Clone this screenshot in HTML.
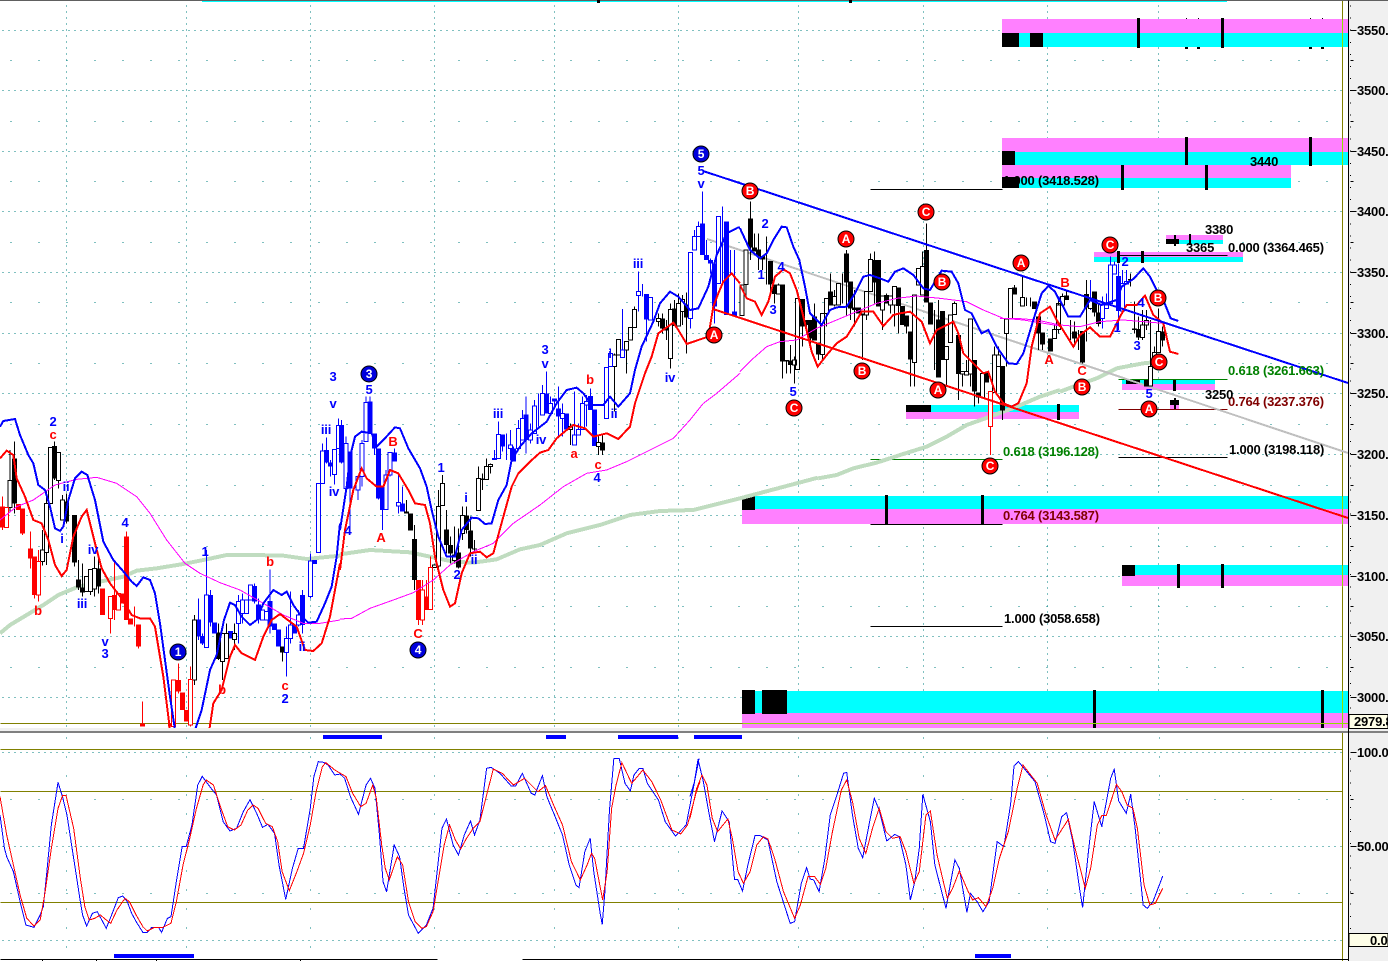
<!DOCTYPE html>
<html><head><meta charset="utf-8"><style>
html,body{margin:0;padding:0;background:#fff;width:1388px;height:961px;overflow:hidden}
svg{display:block}
text{font-family:"Liberation Sans",sans-serif;font-weight:bold;font-size:13px;letter-spacing:-.2px;white-space:pre}
path,polyline{fill:none;shape-rendering:crispEdges}
g.z path,g.z polyline{vector-effect:non-scaling-stroke}
rect{shape-rendering:crispEdges}
.d{stroke:#008080;stroke-width:1;stroke-dasharray:1 5}
.s{stroke:#008080;stroke-width:1;stroke-dasharray:1 27}
.v{stroke:#008080;stroke-width:1;stroke-dasharray:1 18}
.wk{stroke:#000;stroke-width:1}.wb{stroke:#00f;stroke-width:1}.wr{stroke:#f00;stroke-width:1}
.fk{stroke:#000;stroke-width:5}.fb{stroke:#00f;stroke-width:5}.fr{stroke:#f00;stroke-width:5}
.ok{stroke:#000;stroke-width:1;fill:#fff}.ob{stroke:#00f;stroke-width:1;fill:#fff}.or{stroke:#f00;stroke-width:1;fill:#fff}
.mb{stroke:#00f;stroke-width:2}.mr{stroke:#f00;stroke-width:2}
.mp{stroke:#f0f;stroke-width:1}.mg{stroke:#c0dcc0;stroke-width:4}
.sb{stroke:#00f;stroke-width:1}.sr{stroke:#f00;stroke-width:1}
.tb text{fill:#00f;text-anchor:middle}.tr text{fill:#f00;text-anchor:middle}
.cr circle{fill:#f00;stroke:#000;stroke-width:1}.cb circle{fill:#00d;stroke:#000;stroke-width:1}
.cw text{fill:#fff;text-anchor:middle;font-size:12px}
</style></head><body>
<svg width="1388" height="961" viewBox="0 0 1388 961" xmlns="http://www.w3.org/2000/svg">
<defs><clipPath id="m"><rect x="0" y="2" width="1348" height="726"/></clipPath></defs>
<rect width="1388" height="961" fill="#fff"/>
<rect x="1349" y="0" width="39" height="961" fill="#f0f0f0"/>

<!-- grid main -->
<g transform="translate(.5 .5)">
<path class="d" d="M2 30H1342M2 90H1342M2 151H1342M2 211H1342M2 272H1342M2 333H1342M2 393H1342M2 454H1342M2 515H1342M2 576H1342M2 636H1342M2 697H1342"/>
<path class="s" d="M10 60H1342M10 121H1342M10 181H1342M10 242H1342M10 302H1342M10 363H1342M10 424H1342M10 485H1342M10 546H1342M10 606H1342M10 667H1342"/>
<path class="d" d="M66 5V728M186 5V728M310 5V728M434 5V728M554 5V728M678 5V728M798 5V728M923 5V728M1047 5V728M1158 5V728"/>
</g>

<!-- horizontal zones -->
<g>
<rect x="1002" y="19" width="346" height="14" fill="#ff80ff"/><rect x="1002" y="33" width="346" height="14" fill="#0ff"/>
<rect x="1002" y="33" width="17" height="14" fill="#000"/><rect x="1030" y="33" width="13" height="14" fill="#000"/>
<rect x="1137" y="18" width="3" height="30" fill="#000"/><rect x="1221" y="18" width="3" height="30" fill="#000"/>
<rect x="1186" y="18" width="1" height="1" fill="#000"/><rect x="1198" y="18" width="1" height="1" fill="#000"/><rect x="1310" y="18" width="1" height="1" fill="#000"/><rect x="1322" y="18" width="1" height="1" fill="#000"/>
<rect x="1185" y="47" width="3" height="2" fill="#000"/><rect x="1197" y="47" width="3" height="2" fill="#000"/><rect x="1309" y="47" width="3" height="2" fill="#000"/><rect x="1321" y="47" width="3" height="2" fill="#000"/>

<rect x="1002" y="138" width="346" height="14" fill="#ff80ff"/><rect x="1002" y="152" width="346" height="13" fill="#0ff"/>
<rect x="1002" y="151" width="13" height="14" fill="#000"/>
<rect x="1185" y="137" width="3" height="29" fill="#000"/><rect x="1309" y="137" width="3" height="29" fill="#000"/>

<rect x="1002" y="165" width="289" height="13" fill="#ff80ff"/><rect x="1002" y="178" width="289" height="10" fill="#0ff"/>
<rect x="1121" y="165" width="3" height="25" fill="#000"/><rect x="1205" y="165" width="3" height="25" fill="#000"/>

<rect x="1166" y="235" width="57" height="5" fill="#ff80ff"/><rect x="1166" y="240" width="57" height="4" fill="#0ff"/>
<rect x="1189" y="234" width="2" height="11" fill="#000"/>

<rect x="1094" y="252" width="149" height="5" fill="#ff80ff"/><rect x="1094" y="257" width="149" height="5" fill="#0ff"/>
<rect x="1117" y="251" width="3" height="12" fill="#000"/><rect x="1141" y="251" width="3" height="12" fill="#000"/>

<rect x="1122" y="379" width="93" height="5" fill="#0ff"/><rect x="1122" y="384" width="93" height="6" fill="#ff80ff"/>
<rect x="1126" y="380" width="14" height="4" fill="#000"/><rect x="1173" y="379" width="3" height="12" fill="#000"/>

<rect x="906" y="405" width="173" height="7" fill="#0ff"/><rect x="906" y="412" width="173" height="7" fill="#ff80ff"/>
<rect x="906" y="405" width="25" height="7" fill="#000"/><rect x="1057" y="404" width="3" height="16" fill="#000"/>

<rect x="1170" y="405" width="9" height="4" fill="#ff80ff"/><rect x="1170" y="400" width="9" height="5" fill="#000"/><rect x="1174" y="398" width="2" height="12" fill="#000"/>

<rect x="742" y="496" width="606" height="13" fill="#0ff"/><rect x="742" y="509" width="606" height="15" fill="#ff80ff"/>
<rect x="742" y="496" width="13" height="14" fill="#000"/>
<rect x="885" y="495" width="3" height="30" fill="#000"/><rect x="981" y="495" width="3" height="30" fill="#000"/>

<rect x="1122" y="565" width="226" height="10" fill="#0ff"/><rect x="1122" y="575" width="226" height="11" fill="#ff80ff"/>
<rect x="1122" y="565" width="13" height="11" fill="#000"/>
<rect x="1177" y="564" width="3" height="24" fill="#000"/><rect x="1221" y="564" width="3" height="24" fill="#000"/>

<rect x="742" y="691" width="606" height="22" fill="#0ff"/><rect x="742" y="713" width="606" height="15" fill="#ff80ff"/>
<rect x="742" y="690" width="13" height="24" fill="#000"/><rect x="762" y="690" width="25" height="24" fill="#000"/>
<rect x="1093" y="690" width="3" height="38" fill="#000"/><rect x="1321" y="690" width="3" height="38" fill="#000"/>
</g>

<!-- fib lines -->
<g transform="translate(.5 .5)">
<path stroke="#000" d="M870 189H1002M870 524H1002M870 626H1002M1118 255H1227M1118 457H1227"/>
<path stroke="#008000" d="M870 459H1002M1118 379H1227"/>
<path stroke="#800000" d="M1118 409H1227"/>
<path stroke="#808000" d="M0 723H1342M1342 0V961"/>
<path stroke="#90e000" d="M742 723H1348M1342 19V47M1342 138V165M1342 496V524M1342 565V586M1342 691V728"/>
</g>

<g clip-path="url(#m)">
<!-- green MA below candles -->
<g class="z" transform="translate(0,360) scale(.33333)"><polyline class="mg" points="0,820 30,795 80,765 130,735 175,705 235,680 300,665 370,650 410,632 470,625 550,612 620,598 680,585 760,585 850,587 920,597 1020,587"/></g>
<g class="z" transform="translate(340,140) scale(.33333)"><polyline class="mg" points="0,1243 90,1230 210,1237 270,1250 340,1265 400,1268 470,1258 540,1228 600,1215 680,1180 780,1155 870,1125 960,1113 1060,1110 1140,1090 1200,1075 1434,1013"/></g>
<g class="z" transform="translate(740,170) scale(.33333)"><polyline class="mg" points="235,925 290,915 340,895 410,878 480,855 560,830 620,800 680,765 750,740 830,710 900,680 960,660"/></g>
<g class="z" transform="translate(1000,130) scale(.33333)"><polyline class="mg" points="180,785 220,770 290,745 350,715 430,700 450,698"/></g>
<!-- grey trend -->
<path stroke="#c0c0c0" stroke-width="2" d="M707 239L1348 453"/>

<!-- candles Z1 -->
<g class="z" transform="translate(0,360) scale(.33333)">
<path class="wk" d="M43 245V460M163 245V360M200 400V490M223 465V620M235 600V690M247 610V710M295 590V700M655 790V900M847 860V905M30 270V455M127 510V617M139 395V615M175 277V385M187 405V480M271 628V705M283 590V710M259 650V695M583 765V975M667 820V960M680 790V895M703 790V870"/>
<path class="wr" d="M8 410V510M68 445V525M92 515V625M103 590V715M115 570V725M343 600V780M332 710V820M380 515V780M403 740V800M415 793V865M427 1025V1100M535 910V1000M572 920V1100"/>
<path class="wb" d="M595 715V840M607 820V855M619 570V863M631 690V800M715 705V850M727 700V790M763 670V730M775 715V790M810 628V820M859 800V950M871 695V850M895 750V800M907 690V820M931 580V715M967 250V370M979 233V310M991 300V350M1003 268V373M1015 175V265"/>
<path class="fk" d="M43 295V430M163 258V355M200 425V485M223 465V608M235 658V683M247 683V697M295 625V680M655 818V897M847 860V877"/>
<path class="fr" d="M8 440V503M55 432V450M68 445V520M92 565V595M103 590V705M307 685V765M343 705V750M380 530V780M392 775V793M415 793V860M368 700V730M427 1090V1100M535 960V995M548 998V1050M560 1050V1085M512 1090V1100"/>
<path class="fb" d="M595 778V830M607 828V850M631 705V788M643 788V820M691 813V835M763 678V725M775 733V778M810 723V800M823 790V810M835 808V860M883 795V820M907 705V795M943 600V612M979 270V307M991 308V320"/>
<path class="ok" d="M30 362m-6 0h12V442h-12zM127 570m-6 0h12V605h-12zM139 430m-6 0h12V577h-12zM152 262m-6 0h12V430h-12zM175 277m-6 0h12V362h-12zM187 420m-6 0h12V480h-12zM271 628m-6 0h12V695h-12zM283 625m-6 0h12V687h-12zM259 650m-6 0h12V695h-12zM583 780m-6 0h12V960h-12zM667 820m-6 0h12V905h-12zM680 820m-6 0h12V895h-12zM703 820m-6 0h12V838h-12z"/>
<path class="or" d="M20 443m-6 0h12V503h-12zM115 605m-6 0h12V705h-12zM332 710m-6 0h12V775h-12zM355 700m-6 0h12V750h-12zM520 960m-6 0h12V1100h-12zM572 958m-6 0h12V1095h-12z"/>
<path class="ob" d="M619 705m-6 0h12V863h-12zM715 725m-6 0h12V790h-12zM727 720m-6 0h12V760h-12zM739 720m-6 0h12V760h-12zM751 675m-6 0h12V720h-12zM787 750m-6 0h12V780h-12zM799 755m-6 0h12V780h-12zM859 835m-6 0h12V877h-12zM871 795m-6 0h12V835h-12zM895 765m-6 0h12V795h-12zM931 603m-6 0h12V710h-12zM955 370m-6 0h12V578h-12zM967 273m-6 0h12V370h-12zM1003 268m-6 0h12V343h-12zM1015 197m-6 0h12V265h-12z"/>
</g>

<!-- candles Z2 -->
<g class="z" transform="translate(340,140) scale(.33333)">
<path class="wk" d="M199 1080V1120M211 1120V1172M223 1155V1350M319 1110V1240M331 1190V1270M355 1165V1285M379 1100V1180M391 1130V1250M403 1200V1235M295 1050V1295M307 1005V1097M343 1160V1270M367 1100V1200M415 980V1112M427 1000V1050M439 955V1018M451 970V1000M775 885V945M787 885V945M691 850V915M823 640V815M835 598V645M859 605V700M871 562V600M883 500V562M955 520V560M967 520V580M979 540V600M991 490V685M1003 480V558M1015 460V560M1027 465V555M1039 457V640"/>
<path class="wr" d="M235 1320V1455M247 1320V1455M259 1320V1410M271 1250V1408"/>
<path class="wb" d="M5 840V970M18 890V1050M30 1010V1175M54 1010V1080M66 900V1040M78 770V905M90 770V880M103 880V945M115 925V1078M127 1040V1170M138 990V1108M150 937V1010M163 925V965M175 1000V1120M187 1040V1115M463 930V960M475 845V955M487 883V935M499 880V960M511 870V960M520 920V965M535 840V930M547 810V900M558 770V940M571 850V910M583 780V880M595 760V860M607 735V825M619 695V820M631 770V820M643 775V800M655 740V890M667 790V890M680 820V868M703 755V915M715 850V885M727 770V868M739 765V860M751 745V810M763 808V918M799 682V835M811 625V680M847 507V652M895 395V515M907 432V470M919 462V605M931 472V540M1051 337V565M1063 270V330M1075 245V290M1087 155V345M1099 300V360M1111 355V400M1123 370V550M1135 230V430M1147 200V430M1159 245V525M1171 330V400M1183 330V530"/>
<path class="fk" d="M199 1115V1120M211 1120V1172M223 1197V1320M319 1168V1215M331 1215V1240M355 1237V1283M379 1127V1170M391 1172V1225M403 1225V1228M427 1015V1020M787 907V932M967 535V565M979 563V572M1003 505V558M1039 493V533"/>
<path class="fr" d="M235 1320V1440M259 1370V1410"/>
<path class="fb" d="M5 855V968M30 935V1045M90 785V880M103 880V925M115 925V1075M127 1040V1110M163 937V965M187 1090V1115M487 883V920M520 925V965M558 823V900M619 760V820M643 775V785M655 805V830M680 820V868M751 768V810M763 808V918M919 462V538M1087 250V345M1099 345V360M1111 360V370M1123 370V500M1159 245V525M1183 515V530"/>
<path class="ok" d="M295 1100m-6 0h12V1278h-12zM307 1030m-6 0h12V1097h-12zM283 1275m-6 0h12V1282h-12zM343 1245m-6 0h12V1262h-12zM367 1127m-6 0h12V1180h-12zM415 1015m-6 0h12V1112h-12zM439 980m-6 0h12V1018h-12zM451 973m-6 0h12V980h-12zM775 907m-6 0h12V920h-12zM691 860m-6 0h12V868h-12zM823 645m-6 0h12V680h-12zM835 598m-6 0h12V645h-12zM859 605m-6 0h12V630h-12zM871 562m-6 0h12V600h-12zM883 508m-6 0h12V562h-12zM955 535m-6 0h12V545h-12zM991 508m-6 0h12V655h-12zM1015 490m-6 0h12V558h-12zM1027 478m-6 0h12V515h-12z"/>
<path class="or" d="M247 1350m-6 0h12V1440h-12zM271 1282m-6 0h12V1408h-12z"/>
<path class="ob" d="M18 910m-6 0h12V1045h-12zM54 1010m-6 0h12V1050h-12zM66 910m-6 0h12V1010h-12zM78 787m-6 0h12V905h-12zM138 1005m-6 0h12V1108h-12zM150 937m-6 0h12V1005h-12zM175 1088m-6 0h12V1098h-12zM475 883m-6 0h12V955h-12zM463 955m-6 0h12V958h-12zM511 915m-6 0h12V925h-12zM535 865m-6 0h12V925h-12zM547 835m-6 0h12V900h-12zM571 870m-6 0h12V900h-12zM583 798m-6 0h12V880h-12zM607 760m-6 0h12V825h-12zM631 790m-6 0h12V820h-12zM667 820m-6 0h12V835h-12zM703 885m-6 0h12V915h-12zM715 868m-6 0h12V885h-12zM727 790m-6 0h12V868h-12zM739 785m-6 0h12V795h-12zM799 682m-6 0h12V835h-12zM811 640m-6 0h12V680h-12zM847 630m-6 0h12V652h-12zM895 455m-6 0h12V467h-12zM931 472m-6 0h12V540h-12zM1051 337m-6 0h12V535h-12zM1063 290m-6 0h12V330h-12zM1075 260m-6 0h12V290h-12zM1135 230m-6 0h12V430h-12z"/>
</g>

<!-- candles Z3 -->
<g class="z" transform="translate(740,170) scale(.33333)">
<path class="wk" d="M6 345V437M18 240V380M31 95V270M43 190V245M55 190V300M67 258V300M79 200V343M92 273V380M103 343V400M115 340V372M127 343V625M139 570V610M151 525V610M163 560V640M172 385V598M187 387V530M199 450V490M211 450V520M223 400V512M235 517V570M247 430V570M259 385V470M271 310V407M283 360V410M295 340V405M307 310V400M319 240V440M331 335V450M343 360V470M355 413V430M367 430V570M379 365V450M391 250V365M403 245V400M415 270V410M427 378V480M439 370V400M451 378V430M463 350V470M475 352V490M487 408V465M499 437V490M511 485V650M523 375V650M535 295V345M547 245V375M559 160V397M571 397V463M583 420V600M595 390V622M607 423V570M619 530V650M631 435V518M643 395V433M655 495V690M667 605V650M679 570V615M691 447V650M703 570V710M715 668V700M727 610V680M739 608V637M763 530V668M775 530V590M787 588V750M799 447V590M811 355V447M823 345V373M847 315V408M859 383V408M871 383V410M883 395V417M895 440V540M907 487V540M931 505V545M943 460V505M955 400V478"/>
<path class="wr" d="M751 665V855"/>
<path class="fk" d="M31 145V232M43 232V245M55 238V260M67 258V268M92 273V343M103 343V372M127 343V575M139 570V575M151 572V585M187 387V470M199 450V465M211 450V505M223 440V512M235 517V553M271 365V407M319 250V338M331 335V415M343 413V420M355 413V430M367 430V436M403 270V338M415 270V410M439 375V400M475 352V408M487 408V465M499 437V470M511 485V568M559 240V397M571 397V463M595 448V622M607 423V570M655 495V612M703 570V665M715 668V682M739 608V637M787 588V722M823 352V373M883 395V417M895 440V490M907 487V523M931 505V545"/>
<path class="ok" d="M18 240m-6 0h12V343h-12zM6 345m-6 0h12V437h-12zM172 385m-6 0h12V598h-12zM115 345m-6 0h12V372h-12zM163 570m-6 0h12V585h-12zM247 430m-6 0h12V553h-12zM259 385m-6 0h12V430h-12zM295 340m-6 0h12V405h-12zM283 380m-6 0h12V405h-12zM391 268m-6 0h12V365h-12zM379 365m-6 0h12V435h-12zM427 378m-6 0h12V420h-12zM463 350m-6 0h12V405h-12zM451 378m-6 0h12V405h-12zM523 375m-6 0h12V578h-12zM535 295m-6 0h12V345h-12zM547 290m-6 0h12V375h-12zM619 530m-6 0h12V568h-12zM631 435m-6 0h12V518h-12zM643 400m-6 0h12V433h-12zM667 605m-6 0h12V612h-12zM679 605m-6 0h12V615h-12zM691 447m-6 0h12V612h-12zM727 610m-6 0h12V682h-12zM763 555m-6 0h12V668h-12zM775 555m-6 0h12V590h-12zM799 447m-6 0h12V490h-12zM811 355m-6 0h12V447h-12zM847 383m-6 0h12V408h-12zM943 478m-6 0h12V505h-12zM955 400m-6 0h12V478h-12z"/>
<path class="or" d="M751 665m-6 0h12V770h-12z"/>
</g>

<!-- candles Z4 -->
<g class="z" transform="translate(1000,130) scale(.33333)">
<path class="wk" d="M175 500V610M187 490V530M199 480V510M211 570V630M223 575V650M235 600V660M247 603V700M259 450V635M271 480V535M283 485V560M295 520V590M391 430V470M403 515V610M415 560V630M427 540V630M439 540V600M451 570V770M463 650V712M475 535V668M487 590V650"/>
<path class="wb" d="M271 450V540M307 500V595M319 490V530M331 380V520M343 395V432M355 400V600M367 420V543M379 420V462"/>
<path class="fk" d="M199 497V510M223 605V625M247 603V698M259 492V533M283 485V548M295 548V582M391 447V452M403 595V600M415 597V622M439 750V770M487 605V632"/>
<path class="fb" d="M355 438V543"/>
<path class="ok" d="M175 525m-6 0h12V598h-12zM187 500m-6 0h12V525h-12zM271 510m-6 0h12V535h-12zM427 585m-6 0h12V622h-12zM439 572m-6 0h12V585h-12zM451 710m-6 0h12V768h-12zM463 668m-6 0h12V712h-12zM475 605m-6 0h12V668h-12z"/>
<path class="ob" d="M307 522m-6 0h12V565h-12zM319 525m-6 0h12V535h-12zM331 405m-6 0h12V520h-12zM343 405m-6 0h12V432h-12zM367 460m-6 0h12V543h-12zM379 455m-6 0h12V462h-12z"/>
</g>

<!-- pink MA -->
<g class="z" transform="translate(0,360) scale(.33333)"><polyline class="mp" points="0,480 50,440 100,420 165,375 230,358 290,352 350,370 410,410 450,460 500,540 555,610 600,640 660,668 720,690 790,730 850,765 910,790 960,790 1020,780"/></g>
<g class="z" transform="translate(340,140) scale(.33333)"><polyline class="mp" points="0,1437 35,1435 90,1405 160,1380 220,1358 280,1320 330,1275 400,1235 460,1210 520,1150 600,1095 670,1040 740,1000 800,990 860,965 930,930 1000,895 1050,840 1090,790 1130,760 1200,700"/></g>
<g class="z" transform="translate(740,170) scale(.33333)"><polyline class="mp" points="0,605 40,565 80,530 120,515 170,510 230,475 290,450 350,425 410,400 470,385 530,378 600,385 680,395 730,420 790,445 850,450 900,458 960,468"/></g>
<g class="z" transform="translate(1000,130) scale(.33333)"><polyline class="mp" points="0,565 50,565 110,570 180,585 240,590 300,575 370,570 430,575 490,580"/></g>

<!-- blue MA -->
<g class="z" transform="translate(0,360) scale(.33333)">
<polyline class="mb" points="0,200 10,183 45,177 60,225 85,285 100,310 115,375 135,390 150,440 165,505 180,513 190,500 205,420 225,355 245,335 262,345 285,420 310,545 340,600 375,640 395,665 410,678 430,652 450,660 465,700 480,790 495,900 510,1010 525,1110"/>
<polyline class="mb" points="585,1110 605,1050 630,930 650,885 672,780 690,728 705,735 725,770 750,795 770,780 790,730 820,690 845,705 860,695 880,735 905,770 925,788 950,785 975,730 995,680 1010,590 1020,490"/>
<polyline class="mr" points="0,295 20,272 40,285 50,355 75,410 100,480 125,490 145,540 165,615 185,648 200,630 220,530 245,470 260,450 285,550 305,625 330,670 365,715 395,765 420,775 450,775 465,800 490,950 510,1110"/>
<polyline class="mr" points="628,1110 640,1030 665,990 690,890 705,855 725,880 765,900 790,830 815,780 840,762 870,785 890,800 915,870 940,873 965,850 990,770 1005,690 1020,610"/>
</g>
<g class="z" transform="translate(340,140) scale(.33333)">
<polyline class="mb" points="0,1170 20,1040 30,950 45,890 65,875 95,880 110,920 130,900 165,862 180,865 205,925 240,985 260,1040 275,1110 295,1190 320,1250 345,1250 365,1170 395,1133 415,1135 435,1152 455,1150 475,1080 500,1035 515,960 540,920 575,880 620,845 650,790 680,750 710,743 730,760 755,795 790,795 810,770 835,800 870,760 885,690 905,620 940,545 960,490 990,455 1015,470 1050,510 1075,505 1105,440 1130,345 1160,280 1195,262 1200,263"/>
<polyline class="mr" points="0,1290 15,1170 40,1050 65,985 80,1015 110,1040 130,1040 150,990 175,1000 205,1050 225,1090 255,1095 270,1150 285,1250 310,1350 330,1400 345,1390 365,1300 390,1240 420,1235 440,1252 460,1240 490,1130 515,1040 535,1000 570,965 600,938 625,930 650,895 680,870 700,855 735,865 760,890 800,880 835,897 870,860 885,790 915,700 935,650 955,580 1000,548 1015,570 1040,612 1075,600 1105,590 1120,500 1135,460 1150,425 1175,400 1200,430"/>
</g>
<g class="z" transform="translate(740,170) scale(.33333)">
<polyline class="mb" points="0,175 30,240 60,265 80,250 100,210 125,170 140,172 160,230 178,270 195,350 210,430 245,465 270,420 290,412 320,410 345,370 370,320 390,315 420,325 445,335 465,305 490,295 520,315 550,355 570,360 605,302 635,305 655,340 675,420 695,430 725,490 745,480 770,530 805,580 830,582 850,550 880,450 905,370 925,348 945,365 960,395"/>
<polyline class="mr" points="0,345 20,385 45,395 65,435 85,395 105,320 130,298 150,310 170,360 195,460 215,545 233,590 260,555 290,520 320,500 345,460 365,425 400,425 430,468 460,435 480,430 510,425 545,455 570,520 590,480 620,465 640,455 655,490 670,550 695,575 730,610 745,605 765,665 790,700 815,710 835,700 860,640 875,530 900,430 930,410 960,470"/>
</g>
<g class="z" transform="translate(1000,130) scale(.33333)">
<polyline class="mb" points="175,500 205,560 240,560 270,510 305,525 350,510 365,470 400,447 430,415 450,440 475,490 490,510 512,565 535,573"/>
<polyline class="mr" points="170,570 195,610 220,650 240,615 270,592 300,620 330,620 360,560 380,525 410,525 435,497 460,555 490,580 510,665 535,672"/>
</g>
<!-- trend lines -->
<path stroke="#00f" stroke-width="2" d="M703 171L1348 383"/>
<path stroke="#f00" stroke-width="2" d="M713 309L1348 518"/>
</g>

<!-- fib text -->
<g>
<text x="1003" y="185" fill="#000">1.000 (3418.528)</text>
<rect x="1002" y="177" width="17" height="11" fill="#000"/>
<text x="1228" y="252" fill="#000">0.000 (3364.465)</text>
<text x="1228" y="375" fill="#008000">0.618 (3261.663)</text>
<text x="1228" y="406" fill="#800000">0.764 (3237.376)</text>
<text x="1229" y="454" fill="#000">1.000 (3198.118)</text>
<text x="1003" y="456" fill="#008000">0.618 (3196.128)</text>
<text x="1003" y="520" fill="#800000">0.764 (3143.587)</text>
<text x="1004" y="623" fill="#000">1.000 (3058.658)</text>
<text x="1250" y="166" fill="#000">3440</text>
<text x="1205" y="234" fill="#000">3380</text>
<text x="1186" y="252" fill="#000">3365</text>
<text x="1205" y="399" fill="#000">3250</text>
<rect x="1166" y="239" width="13" height="5" fill="#000"/><rect x="1174" y="235" width="2" height="11" fill="#000"/>
</g>

<!-- wave labels -->
<g class="tb">
<text x="53" y="426">2</text><text x="66" y="491">ii</text><text x="62" y="543">i</text><text x="82" y="608">iii</text><text x="93" y="554">iv</text><text x="105" y="646">v</text><text x="105" y="658">3</text><text x="125" y="527">4</text>
<text x="205" y="556">1</text><text x="285" y="703">2</text><text x="302" y="651">ii</text><text x="333" y="381">3</text><text x="333" y="408">v</text><text x="326" y="434">iii</text><text x="334" y="496">iv</text><text x="369" y="394">5</text><text x="348" y="535">4</text>
<text x="441" y="472">1</text><text x="466" y="502">i</text><text x="457" y="579">2</text><text x="474" y="564">ii</text><text x="498" y="418">iii</text><text x="541" y="444">iv</text><text x="545" y="354">3</text><text x="545" y="368">v</text><text x="597" y="482">4</text>
<text x="638" y="268">iii</text><text x="610" y="358">i</text><text x="614" y="418">ii</text><text x="670" y="382">iv</text><text x="701" y="175">5</text><text x="701" y="188">v</text>
<text x="765" y="228">2</text><text x="761" y="279">1</text><text x="773" y="314">3</text><text x="781" y="271">4</text><text x="793" y="396">5</text>
<text x="1125" y="266">2</text><text x="1117" y="332">1</text><text x="1137" y="350">3</text><text x="1141" y="307">4</text><text x="1149" y="398">5</text>
</g>
<g class="tr">
<text x="53" y="439">c</text><text x="38" y="615">b</text><text x="222" y="694">b</text><text x="270" y="566">b</text><text x="285" y="690">c</text><text x="381" y="542">A</text><text x="393" y="446">B</text><text x="418" y="638">C</text><text x="574" y="458">a</text><text x="590" y="384">b</text><text x="598" y="469">c</text>
<text x="1049" y="364">A</text><text x="1065" y="287">B</text><text x="1082" y="375">C</text>
</g>

<!-- circles -->
<g class="cr cw">
<circle cx="750" cy="191" r="8"/><text x="750" y="195">B</text>
<circle cx="714" cy="335" r="8"/><text x="714" y="339">A</text>
<circle cx="794" cy="408" r="8"/><text x="794" y="412">C</text>
<circle cx="846" cy="239" r="8"/><text x="846" y="243">A</text>
<circle cx="862" cy="371" r="8"/><text x="862" y="375">B</text>
<circle cx="926" cy="212" r="8"/><text x="926" y="216">C</text>
<circle cx="942" cy="282" r="8"/><text x="942" y="286">B</text>
<circle cx="938" cy="390" r="8"/><text x="938" y="394">A</text>
<circle cx="1021" cy="263" r="8"/><text x="1021" y="267">A</text>
<circle cx="990" cy="466" r="8"/><text x="990" y="470">C</text>
<circle cx="1082" cy="387" r="8"/><text x="1082" y="391">B</text>
<circle cx="1110" cy="245" r="8"/><text x="1110" y="249">C</text>
<circle cx="1158" cy="298" r="8"/><text x="1158" y="302">B</text>
<circle cx="1159" cy="362" r="8"/><text x="1159" y="366">C</text>
<circle cx="1149" cy="409" r="8"/><text x="1149" y="413">A</text>
</g>
<g class="cb cw">
<circle cx="178" cy="652" r="8"/><text x="178" y="656">1</text>
<circle cx="369" cy="374" r="8"/><text x="369" y="378">3</text>
<circle cx="418" cy="650" r="8"/><text x="418" y="654">4</text>
<circle cx="701" cy="154" r="8"/><text x="701" y="158">5</text>
</g>

<!-- top line -->
<rect x="0" y="0" width="1388" height="1" fill="#606060"/>
<rect x="202" y="1" width="1025" height="1" fill="#0ff"/>
<rect x="597" y="0" width="3" height="3" fill="#000"/><rect x="849" y="0" width="3" height="3" fill="#000"/>

<!-- separator -->
<rect x="0" y="728" width="1388" height="3" fill="#f0f0f0"/>
<rect x="0" y="731" width="1388" height="2" fill="#808080"/>

<!-- lower panel -->
<g transform="translate(.5 .5)">
<path stroke="#808000" d="M0 749H1342M0 791H1342M0 902H1342"/>
<path class="d" d="M2 752H1342M2 846H1342M2 940H1342"/>
<path class="s" d="M10 799H1342M10 893H1342"/>
<path class="v" d="M66 737V958M186 737V958M310 737V958M434 737V958M554 737V958M678 737V958M798 737V958M923 737V958M1047 737V958M1159 737V958"/>
</g>
<rect x="323" y="735" width="59" height="4" fill="#00f"/><rect x="546" y="735" width="20" height="4" fill="#00f"/><rect x="618" y="735" width="60" height="4" fill="#00f"/><rect x="694" y="735" width="48" height="4" fill="#00f"/>
<rect x="114" y="954" width="80" height="4" fill="#00f"/><rect x="975" y="954" width="36" height="4" fill="#00f"/>
<g class="z" transform="translate(0,725) scale(.44643,.33333)">
<polyline class="sb" points="0,270 10,370 15,395 30,440 45,530 58,600 76,607 90,570 97,545 105,440 115,300 130,172 140,215 150,270 165,400 180,530 185,570 194,603 207,565 218,560 230,590 238,610 250,570 265,518 275,513 285,530 295,565 305,590 320,622 330,622 340,607 355,607 362,622 375,580 383,575 395,470 408,365 417,365 430,300 443,180 453,154 470,185 485,210 500,290 515,318 530,310 545,260 560,224 575,265 588,307 600,298 615,325 625,420 640,523 655,430 668,370 680,370 695,250 703,155 713,110 725,112 735,120 750,150 762,147 772,160 785,215 803,268 820,180 830,160 840,190 850,330 858,470 866,500 883,360 895,395 905,490 915,570 937,625 955,600 970,550 980,430 990,310 1000,282 1015,360 1027,390 1040,330 1054,288 1063,330 1075,285 1090,130 1100,127 1120,145 1145,183 1155,183 1170,145 1190,205 1198,210 1215,152 1225,215 1245,280 1260,330 1275,420 1290,480 1297,488 1310,380 1322,340 1330,440 1345,570 1349,598 1355,500 1365,260 1375,100 1387,100 1400,175 1412,198 1420,150 1432,130 1440,130 1450,175 1475,225 1490,290 1513,333 1537,300 1550,210 1566,100"/>
<polyline class="sr" points="0,215 15,330 30,420 45,510 60,580 76,603 90,585 100,510 115,370 130,250 140,212 148,212 165,310 180,460 190,545 200,585 212,580 225,570 238,585 248,595 262,555 280,520 290,530 305,570 320,605 330,618 345,608 365,607 383,595 395,530 410,420 425,340 440,250 455,180 462,165 478,180 495,250 510,305 525,315 540,300 555,255 567,240 578,250 595,295 610,305 622,350 632,440 648,497 665,440 680,385 695,300 708,200 722,125 730,113 750,135 775,155 790,205 808,245 820,235 835,180 843,220 855,360 863,430 872,465 890,395 902,420 915,530 930,590 945,610 955,605 970,560 985,440 995,360 1007,300 1020,345 1032,372 1045,340 1060,310 1075,290 1090,210 1105,132 1125,145 1150,180 1175,160 1205,200 1222,182 1240,240 1260,300 1280,410 1300,465 1315,420 1325,385 1332,400 1350,525 1360,440 1370,250 1380,180 1393,113 1415,175 1440,135 1460,170 1480,225 1505,315 1525,327 1540,300 1560,200 1568,170"/>
</g>
<g class="z" transform="translate(690,725) scale(.44516,.33333)">
<polyline class="sb" points="0,215 10,170 18,103 30,170 42,260 55,350 72,258 88,290 100,463 107,463 118,498 130,420 146,332 158,332 175,345 195,470 225,595 235,590 250,475 262,428 270,462 278,465 290,500 303,400 315,270 330,210 345,145 352,142 365,270 378,370 388,398 405,280 414,220 425,255 442,348 460,328 470,335 485,420 495,525 505,470 515,370 523,208 540,290 550,420 575,550 590,440 595,405 605,430 622,562 630,505 645,530 658,560 672,530 690,350 705,365 720,240 728,122 738,110 775,170 795,265 810,350 820,355 835,275 846,263 860,350 875,490 882,548 895,380 908,230 925,305 945,160 953,133 963,228 980,265 990,208 1000,310 1018,540 1027,550 1040,530 1062,453"/>
<polyline class="sr" points="0,280 15,190 27,150 38,180 50,280 62,320 85,282 95,340 108,440 120,475 135,440 150,360 165,335 175,342 190,400 210,500 235,580 248,540 265,455 280,455 293,478 305,430 320,320 340,195 352,165 365,230 380,340 395,385 410,310 425,250 440,320 455,340 472,335 485,380 503,475 515,440 530,270 540,258 555,390 578,520 590,490 605,438 625,500 635,525 648,518 665,545 680,490 695,400 715,320 735,190 748,120 780,175 800,270 820,345 850,283 865,370 888,490 900,430 915,300 925,272 935,272 958,178 970,200 982,240 995,250 1005,310 1020,480 1033,540 1045,535 1062,490"/>
</g>
<g transform="translate(.5 .5)">
<path stroke="#000" d="M0 959H437M522 959H1348M42 959V961M96 959V961M156 959V961M300 959V961"/>
<!-- right axis -->
<path stroke="#000" d="M1348 0V961"/>
<path stroke="#000" d="M1350 60h3M1350 121h3M1350 181h3M1350 242h3M1350 302h3M1350 363h3M1350 424h3M1350 485h3M1350 546h3M1350 606h3M1350 667h3M1350 799h3M1350 893h3M1350 30h6M1350 90h6M1350 151h6M1350 211h6M1350 272h6M1350 333h6M1350 393h6M1350 454h6M1350 515h6M1350 576h6M1350 636h6M1350 697h6M1350 752h6M1350 846h6"/>
<path stroke="#000" stroke-dasharray="1 11.1" d="M1350 5V728M1350 758V930"/>
</g>
<g fill="#000">
<text x="1357" y="35">3550.00</text><text x="1357" y="95">3500.00</text><text x="1357" y="156">3450.00</text><text x="1357" y="216">3400.00</text><text x="1357" y="277">3350.00</text><text x="1357" y="338">3300.00</text><text x="1357" y="398">3250.00</text><text x="1357" y="459">3200.00</text><text x="1357" y="520">3150.00</text><text x="1357" y="581">3100.00</text><text x="1357" y="641">3050.00</text><text x="1357" y="702">3000.00</text>
</g>
<rect x="1349" y="714.5" width="39" height="14" fill="#ffffe8" stroke="#000"/>
<text x="1354" y="726" fill="#000">2979.80</text>
<text x="1357" y="757" fill="#000">100.00</text>
<text x="1357" y="851" fill="#000">50.00</text>
<rect x="1349" y="933.5" width="39" height="13" fill="#ffffe8" stroke="#000"/>
<text x="1370" y="945" fill="#000">0.00</text>
</svg>
</body></html>
